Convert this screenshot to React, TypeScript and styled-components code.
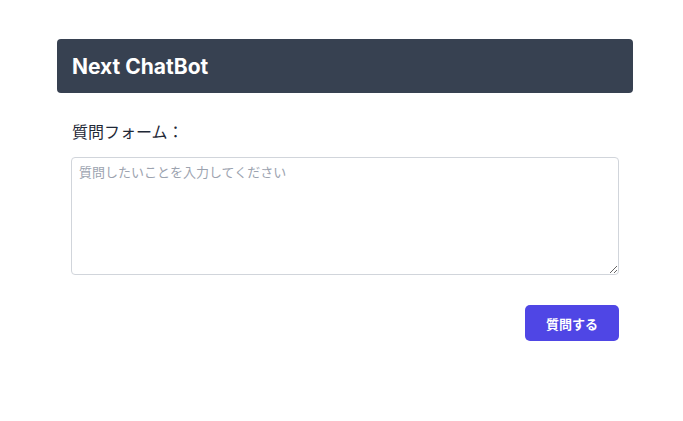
import React from "react";
import styled, { createGlobalStyle } from "styled-components";

const Global = createGlobalStyle`
  html, body { margin: 0; padding: 0; background: #ffffff; }
  body { font-family: Inter, "Noto Sans CJK JP", sans-serif; color: #111827; }
  * { box-sizing: border-box; }
`;

const Page = styled.div`
  width: 576px;
  margin: 39px 0 0 57px;
`;

const Header = styled.header`
  height: 54px;
  background: #374151;
  border-radius: 4px;
  display: flex;
  align-items: center;
  padding: 0 15px;
`;

const Title = styled.h1`
  margin: 0;
  font-family: Inter, "Noto Sans CJK JP", sans-serif;
  font-size: 21px;
  font-weight: 700;
  color: #ffffff;
`;

const Form = styled.form`
  display: flex;
  flex-direction: column;
  padding: 26px 14px 0 14px;
`;

const Label = styled.label`
  font-family: "Noto Sans CJK JP", sans-serif;
  font-size: 16px;
  line-height: 24px;
  color: #1f2937;
  margin: 0 0 14px 1px;
`;

const TextArea = styled.textarea`
  display: block;
  width: 548px;
  height: 118px;
  border: 1px solid #d1d5db;
  border-radius: 4px;
  padding: 4px 7px;
  font-family: "Noto Sans CJK JP", sans-serif;
  font-size: 13px;
  line-height: 20px;
  color: #111827;
  resize: vertical;
  outline: none;
  &::placeholder { color: #9ca3af; }
`;

const Actions = styled.div`
  display: flex;
  justify-content: flex-end;
  margin-top: 30px;
`;

const Button = styled.button`
  width: 94px;
  height: 36px;
  border: none;
  border-radius: 5px;
  background: #4f46e5;
  color: #ffffff;
  font-family: "Noto Sans CJK JP", sans-serif;
  font-size: 13px;
  font-weight: 700;
  cursor: pointer;
`;

export default function App() {
  return (
    <>
      <Global />
      <Page>
        <Header>
          <Title>Next ChatBot</Title>
        </Header>
        <Form onSubmit={(e) => e.preventDefault()}>
          <Label htmlFor="q">質問フォーム：</Label>
          <TextArea id="q" placeholder="質問したいことを入力してください" />
          <Actions>
            <Button type="submit">質問する</Button>
          </Actions>
        </Form>
      </Page>
    </>
  );
}
